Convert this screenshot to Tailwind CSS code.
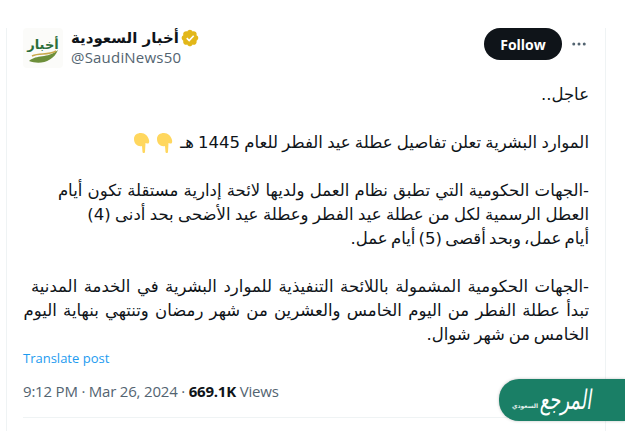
<!DOCTYPE html>
<html lang="ar">
<head>
<meta charset="utf-8">
<title>post</title>
<script src="https://cdn.jsdelivr.net/npm/@tailwindcss/browser@4"></script>
</head>
<body class="bg-white font-['Open_Sans',sans-serif] overflow-hidden">
<div class="relative w-[625px] h-[431px] overflow-hidden">
  <div class="w-[600px] h-[431px] ml-[6px] border-x border-[#eff3f4] pl-4 pr-4">
    <!-- header -->
    <div class="flex items-start h-[40px] mt-[28px]">
      <div class="w-[40px] h-[40px] rounded bg-[#fbfbf9] flex items-center justify-center">
        <svg width="36" height="36" viewBox="0 0 36 36">
          <text x="18" y="19" text-anchor="middle" font-size="13" font-weight="700" fill="#2c6e3a" font-family="'DejaVu Sans',sans-serif">أخبار</text>
          <path d="M4 31C12 24 22 29 33 20C28 32 15 35 4 31Z" fill="#6d8f3a"/>
          <path d="M7 26C15 22 22 26 31 21" stroke="#c9a94a" stroke-width="1.500" fill="none"/>
        </svg>
      </div>
      <div class="ml-2 flex flex-col">
        <div class="flex items-center h-[20px]">
          <span dir="rtl" class="text-[15px] font-bold text-[#0f1419] font-['DejaVu_Sans',sans-serif] leading-5">أخبار السعودية</span>
          <svg class="ml-[2px]" width="18" height="18" viewBox="0 0 22 22">
            <path d="M20.4 11c0-1.4-.9-2.7-2.2-3.3.5-1.3.2-2.8-.8-3.9-1-1-2.500-1.300-3.900-.8C12.900 1.700 11.600.8 10.200.8s-2.700.9-3.300 2.200c-1.300-.5-2.800-.2-3.900.8-1 1-1.300 2.600-.8 3.900C1 8.300.1 9.600.1 11s.9 2.700 2.100 3.300c-.5 1.300-.2 2.800.8 3.900 1 1 2.600 1.300 3.900.8.600 1.300 1.900 2.200 3.300 2.200s2.700-.9 3.300-2.200c1.300.5 2.900.2 3.900-.8 1-1 1.300-2.600.8-3.900 1.300-.6 2.200-1.900 2.200-3.300z" fill="#e2b719" transform="translate(.7 0)"/>
            <path d="M7 11.200l3 3 5.500-6" stroke="#fff" stroke-width="2" fill="none"/>
          </svg>
        </div>
        <span class="text-[15px] leading-[19px] text-[#536471] tracking-[0.2px]">@SaudiNews50</span>
      </div>
      <div class="ml-auto flex items-center">
        <button class="h-[32px] w-[78px] rounded-full bg-[#0f1419] text-white text-[14px] font-bold">Follow</button>
        <svg class="ml-[8px] mr-[1px]" width="18" height="18" viewBox="0 0 24 24" fill="#536471">
          <circle cx="5" cy="12" r="2"/><circle cx="12" cy="12" r="2"/><circle cx="19" cy="12" r="2"/>
        </svg>
      </div>
    </div>
    <!-- body -->
    <div dir="rtl" class="mt-[15px] text-[16.5px] leading-[24px] text-[#0f1419] font-['DejaVu_Sans',sans-serif]">
      <p>عاجل..</p>
      <p class="h-[24px]"></p>
      <p class="flex items-center whitespace-nowrap [word-spacing:-1px]">الموارد البشرية تعلن تفاصيل عطلة عيد الفطر للعام 1445 هـ
        <svg class="mr-[7px]" width="16" height="20" viewBox="0 0 16 20" fill="#ffd75e"><path d="M0 6C0 2 3 0 7 0c4 0 7 3 8 7 .5 2 0 4-2 3.500L11.500 10 11 19c0 1.500-2.500 1.500-2.500 0L8 13C4 14 0 11 0 6z"/></svg>
        <svg class="mr-[7px]" width="16" height="20" viewBox="0 0 16 20" fill="#ffd75e"><path d="M0 6C0 2 3 0 7 0c4 0 7 3 8 7 .5 2 0 4-2 3.500L11.500 10 11 19c0 1.500-2.500 1.500-2.500 0L8 13C4 14 0 11 0 6z"/></svg>
      </p>
      <p class="h-[24px]"></p>
      <p class="whitespace-nowrap">-الجهات الحكومية التي تطبق نظام العمل ولديها لائحة إدارية مستقلة تكون أيام</p>
      <p class="whitespace-nowrap [word-spacing:-0.8px]">العطل الرسمية لكل من عطلة عيد الفطر وعطلة عيد الأضحى بحد أدنى (4)</p>
      <p class="whitespace-nowrap [word-spacing:-2px]">أيام عمل، وبحد أقصى (5) أيام عمل.</p>
      <p class="h-[24px]"></p>
      <p class="whitespace-nowrap [word-spacing:1.300px]">-الجهات الحكومية المشمولة باللائحة التنفيذية للموارد البشرية في الخدمة المدنية</p>
      <p class="whitespace-nowrap [word-spacing:1px]">تبدأ عطلة الفطر من اليوم الخامس والعشرين من شهر رمضان وتنتهي بنهاية اليوم</p>
      <p class="whitespace-nowrap [word-spacing:-1.500px]">الخامس من شهر شوال.</p>
    </div>
    <p class="mt-[3px] text-[13px] leading-4 text-[#1d9bf0]">Translate post</p>
    <p class="mt-[15px] text-[15px] leading-5 text-[#536471] whitespace-nowrap tracking-[-0.2px]">9:12 PM · Mar 26, 2024 · <span class="font-bold text-[#0f1419]">669.1K</span> Views</p>
    <div class="mt-[16px] border-t border-[#eff3f4]"></div>
  </div>
  <!-- watermark over the post -->
  <div class="absolute left-[499px] top-[379px] w-[126px] h-[42px] rounded-l-[20px] bg-[#1a7f66] flex items-center shadow-[0_0_3px_rgba(0,0,0,0.25)]">
    <span dir="rtl" class="ml-[13px] text-[6px] font-bold text-white/90 font-['DejaVu_Sans',sans-serif] mt-[10px]">السعودي</span>
    <span dir="rtl" class="ml-[3px] text-[18px] leading-[34px] text-white font-['DejaVu_Sans',sans-serif] whitespace-nowrap -skew-x-12 scale-y-150">المرجع</span>
  </div>
</div>
</body>
</html>
